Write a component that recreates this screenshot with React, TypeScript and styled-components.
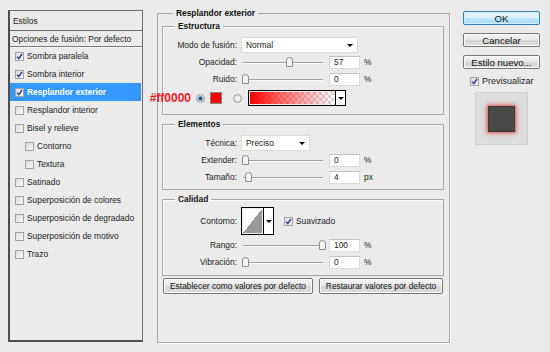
import React from "react";
import styled, { createGlobalStyle, css } from "styled-components";

const GlobalStyle = createGlobalStyle`
  html, body {
    margin: 0;
    padding: 0;
    background: #ebebeb;
  }
  body {
    font-family: "Liberation Sans", Arial, sans-serif;
    font-size: 8.4px;
    color: #1c1c1c;
  }
`;

type ListItem = { label: string; checked?: boolean; indent?: boolean; active?: boolean };

const items: ListItem[] = [
    { label: "Sombra paralela", checked: true },
    { label: "Sombra interior", checked: true },
    { label: "Resplandor exterior", checked: true, active: true },
    { label: "Resplandor interior" },
    { label: "Bisel y relieve" },
    { label: "Contorno", indent: true },
    { label: "Textura", indent: true },
    { label: "Satinado" },
    { label: "Superposición de colores" },
    { label: "Superposición de degradado" },
    { label: "Superposición de motivo" },
    { label: "Trazo" },
];

const CheckBox = ({ checked }: { checked?: boolean }) => (
    <StyledCheckBox>
        {checked && (
            <svg width="7" height="7" viewBox="0 0 7 7">
                <path d="M1 3.6 L2.8 5.6 L6 1" fill="none" stroke="#27378a" strokeWidth="1.4" />
            </svg>
        )}
    </StyledCheckBox>
);

const Slider = ({ value }: { value: number }) => (
    <StyledSlider>
        <SliderTrack />
        <SliderThumb style={{ left: `${1 + value * 0.77}px` }}>
            <svg width="7" height="10" viewBox="0 0 7 10">
                <path d="M0.5 3 Q0.5 0.5 3.5 0.5 Q6.5 0.5 6.5 3 L6.5 9.5 L0.5 9.5 Z" fill="#f4f4f4" stroke="#8d8d8d" />
            </svg>
        </SliderThumb>
    </StyledSlider>
);

const SliderRow = ({ label, value, unit }: { label: string; value: number; unit: string }) => (
    <SliderGrid>
        <FieldLabel>{label}</FieldLabel>
        <Slider value={value} />
        <NumberField>{value}</NumberField>
        <Unit>{unit}</Unit>
    </SliderGrid>
);

export default function App() {
    return (
        <>
            <GlobalStyle />
            <Dialog>
                <StylesPanel>
                    <PanelHeader>Estilos</PanelHeader>
                    <BlendOptions>Opciones de fusión: Por defecto</BlendOptions>
                    {items.map((item) => (
                        <ListRow key={item.label} $indent={item.indent} $active={item.active}>
                            <CheckBox checked={item.checked} />
                            <span>{item.label}</span>
                        </ListRow>
                    ))}
                </StylesPanel>

                <OuterGroup>
                    <GroupTitle $offset={11}>Resplandor exterior</GroupTitle>

                    <InnerGroup $padTop={6} $padBottom={8}>
                        <GroupTitle $offset={12}>Estructura</GroupTitle>
                        <FieldRow>
                            <FieldLabel>Modo de fusión:</FieldLabel>
                            <Select $width={117}>
                                Normal
                                <Caret />
                            </Select>
                        </FieldRow>
                        <SliderRow label="Opacidad:" value={57} unit="%" />
                        <SliderRow label="Ruido:" value={0} unit="%" />
                        <ColorRow>
                            <RadioWrap>
                                <ColorNote>#ff0000</ColorNote>
                                <Radio $checked />
                            </RadioWrap>
                            <Swatch />
                            <Radio />
                            <GradientPicker>
                                <GradientFill />
                                <PickerButton>
                                    <Caret />
                                </PickerButton>
                            </GradientPicker>
                        </ColorRow>
                    </InnerGroup>

                    <InnerGroup $padTop={6} $padBottom={4} $spaced>
                        <GroupTitle $offset={12}>Elementos</GroupTitle>
                        <FieldRow>
                            <FieldLabel>Técnica:</FieldLabel>
                            <Select $width={69}>
                                Preciso
                                <Caret />
                            </Select>
                        </FieldRow>
                        <SliderRow label="Extender:" value={0} unit="%" />
                        <SliderRow label="Tamaño:" value={4} unit="px" />
                    </InnerGroup>

                    <InnerGroup $padTop={3} $padBottom={5} $spaced>
                        <GroupTitle $offset={12}>Calidad</GroupTitle>
                        <ContourRow>
                            <FieldLabel>Contorno:</FieldLabel>
                            <ContourPicker>
                                <ContourCurve />
                                <PickerButton>
                                    <Caret />
                                </PickerButton>
                            </ContourPicker>
                            <CheckLabel>
                                <CheckBox checked />
                                Suavizado
                            </CheckLabel>
                        </ContourRow>
                        <SliderRow label="Rango:" value={100} unit="%" />
                        <SliderRow label="Vibración:" value={0} unit="%" />
                    </InnerGroup>

                    <DefaultsBar>
                        <PanelButton $width={150}>Establecer como valores por defecto</PanelButton>
                        <PanelButton $width={124}>Restaurar valores por defecto</PanelButton>
                    </DefaultsBar>
                </OuterGroup>

                <SideColumn>
                    <SideButton $primary>OK</SideButton>
                    <SideButton>Cancelar</SideButton>
                    <SideButton>Estilo nuevo...</SideButton>
                    <PreviewToggle>
                        <CheckBox checked />
                        Previsualizar
                    </PreviewToggle>
                    <PreviewBox>
                        <PreviewSquare />
                    </PreviewBox>
                </SideColumn>
            </Dialog>
        </>
    );
}

const Dialog = styled.div`
    display: flex;
    align-items: flex-start;
    width: 550px;
    height: 352px;
    box-sizing: border-box;
    padding: 10px 0 0 8px;
`;

/* left list */

const StylesPanel = styled.div`
    width: 135px;
    height: 332px;
    box-sizing: border-box;
    border: 1px solid #6e6e6e;
    border-left: 2px solid #4e4e4e;
    border-bottom: 2px solid #4e4e4e;
    display: flex;
    flex-direction: column;
`;

const PanelHeader = styled.div`
    height: 19px;
    display: flex;
    align-items: center;
    padding-left: 3px;
    border-bottom: 1px solid #707070;
`;

const BlendOptions = styled.div`
    height: 15px;
    display: flex;
    align-items: center;
    padding-left: 2px;
    border-bottom: 1px solid #7c7c7c;
    box-shadow: 0 1px 0 #fafafa;
`;

const ListRow = styled.div<{ $indent?: boolean; $active?: boolean }>`
    height: 18px;
    display: flex;
    align-items: center;
    gap: 3px;
    margin-right: 1px;
    padding-left: ${(p) => (p.$indent ? 15 : 5)}px;
    ${(p) =>
        p.$active &&
        css`
            background: #3399fe;
            color: #fff;
            font-weight: bold;
        `}
`;

const StyledCheckBox = styled.span`
    width: 9px;
    height: 9px;
    box-sizing: border-box;
    flex: none;
    border: 1px solid #a3a3a3;
    background: linear-gradient(135deg, #dcdcdc, #f8f8f8);
    display: flex;
    align-items: center;
    justify-content: center;
`;

/* group boxes */

const OuterGroup = styled.fieldset`
    margin: -2px 0 0 14px;
    width: 293px;
    height: 335px;
    box-sizing: border-box;
    min-width: 0;
    padding: 3px 5px 0 4px;
    border: 1px solid #a8a8a8;
    box-shadow: 1px 1px 0 #fbfbfb;
`;

const GroupTitle = styled.legend<{ $offset: number }>`
    margin-left: ${(p) => p.$offset}px;
    padding: 0 3px;
    line-height: 10px;
    font-weight: bold;
    color: #111;
`;

const InnerGroup = styled.fieldset<{ $padTop: number; $padBottom: number; $spaced?: boolean }>`
    margin: ${(p) => (p.$spaced ? 4 : 0)}px 0 0;
    min-width: 0;
    border: 1px solid #a8a8a8;
    box-shadow: inset 1px 1px 0 #fbfbfb;
    padding: ${(p) => p.$padTop}px 0 ${(p) => p.$padBottom}px;
    display: flex;
    flex-direction: column;
    gap: 1px;
`;

const FieldRow = styled.div`
    display: grid;
    grid-template-columns: 74px auto;
    column-gap: 4px;
    align-items: center;
    justify-content: start;
    height: 16px;
`;

const FieldLabel = styled.span`
    text-align: right;
    white-space: nowrap;
`;

const Select = styled.div<{ $width: number }>`
    width: ${(p) => p.$width}px;
    height: 16px;
    box-sizing: border-box;
    background: #fff;
    border: 1px solid #dadada;
    display: flex;
    align-items: center;
    justify-content: space-between;
    padding: 0 4px 0 4px;
`;

const Caret = styled.span`
    width: 0;
    height: 0;
    border-left: 3px solid transparent;
    border-right: 3px solid transparent;
    border-top: 3px solid #000;
`;

const SliderGrid = styled.div`
    display: grid;
    grid-template-columns: 74px 84px 31px auto;
    column-gap: 4px;
    align-items: center;
    height: 16px;
`;

const StyledSlider = styled.div`
    position: relative;
    height: 12px;
`;

const SliderTrack = styled.div`
    position: absolute;
    left: 2px;
    right: 2px;
    top: 6px;
    height: 1px;
    background: #a2a2a2;
    box-shadow: 0 1px 0 #fdfdfd;
`;

const SliderThumb = styled.div`
    position: absolute;
    top: 1px;
    width: 7px;
    height: 10px;
    line-height: 0;
`;

const NumberField = styled.div`
    height: 13px;
    box-sizing: border-box;
    background: #fff;
    border: 1px solid #d9d9d9;
    border-top-color: #c2c2c2;
    display: flex;
    align-items: center;
    padding-left: 4px;
`;

const Unit = styled.span`
    padding-left: 0;
`;

/* color row */

const ColorRow = styled.div`
    display: flex;
    align-items: center;
    height: 16px;
    margin-top: 2px;
    padding-left: 33px;
`;

const RadioWrap = styled.div`
    position: relative;
    display: flex;
`;

const ColorNote = styled.span`
    position: absolute;
    right: calc(100% + 5px);
    top: -4px;
    font-size: 12px;
    font-weight: bold;
    line-height: 16px;
    color: #ec1c24;
`;

const Radio = styled.span<{ $checked?: boolean }>`
    width: 9px;
    height: 9px;
    box-sizing: border-box;
    border-radius: 50%;
    border: 1px solid #9a9a9a;
    background: ${(p) =>
        p.$checked
            ? "radial-gradient(circle, #1f5f96 0 1.6px, #8fb8d8 2.2px, #e6e6e6 3px)"
            : "radial-gradient(circle, #f6f6f6, #d8d8d8)"};
    margin-right: 5px;
`;

const Swatch = styled.span`
    width: 12px;
    height: 12px;
    box-sizing: border-box;
    background: #fe0000;
    border: 1px solid #8a8a8a;
    margin-right: 11px;
`;

const GradientPicker = styled.div`
    display: flex;
    width: 98px;
    height: 16px;
    box-sizing: border-box;
    border: 1px solid #000;
    margin-left: 1px;
`;

const GradientFill = styled.div`
    flex: 1;
    margin: 1px;
    background: linear-gradient(to right, #ff0000, rgba(255, 0, 0, 0.55) 40%, rgba(255, 0, 0, 0)),
        repeating-conic-gradient(#d6d6d6 0 25%, #ffffff 0 50%) 0 0 / 6px 6px;
`;

const PickerButton = styled.div`
    width: 9px;
    background: #fff;
    border-left: 1px solid #000;
    display: flex;
    align-items: center;
    justify-content: center;
`;

/* contour row */

const ContourRow = styled.div`
    display: grid;
    grid-template-columns: 74px auto auto;
    column-gap: 4px;
    align-items: center;
    justify-content: start;
    height: 28px;
    margin-bottom: 1px;
`;

const ContourPicker = styled.div`
    display: flex;
    width: 33px;
    height: 28px;
    box-sizing: border-box;
    border: 1px solid #000;
`;

const ContourCurve = styled.div`
    flex: 1;
    margin: 1px;
    background: linear-gradient(to bottom right, #ffffff 50%, #9a9a9a 50%);
`;

const CheckLabel = styled.label`
    display: flex;
    align-items: center;
    gap: 3px;
    margin-left: 6px;
`;

/* buttons */

const buttonFace = css`
    box-sizing: border-box;
    border: 1px solid #777;
    border-radius: 2px;
    background: linear-gradient(#f6f6f6, #e6e6e6 50%, #d6d6d6 51%, #dcdcdc);
    box-shadow: inset 0 0 0 1px #fbfbfb;
    display: flex;
    align-items: center;
    justify-content: center;
    color: #111;
`;

const DefaultsBar = styled.div`
    display: flex;
    gap: 6px;
    margin-top: 2px;
    padding-left: 1px;
`;

const PanelButton = styled.div<{ $width: number }>`
    ${buttonFace}
    width: ${(p) => p.$width}px;
    height: 16px;
`;

const SideColumn = styled.div`
    display: flex;
    flex-direction: column;
    width: 77px;
    margin: 1px 0 0 13px;
    gap: 8px;
`;

const SideButton = styled.div<{ $primary?: boolean }>`
    ${buttonFace}
    height: 14px;
    font-size: 9.6px;
    ${(p) =>
        p.$primary &&
        css`
            border-color: #3c7fb1;
            background: linear-gradient(#eaf6fd, #d9f0fc 50%, #bee6fd 51%, #a7d9f5);
            box-shadow: inset 0 0 0 1px #cdeefc;
        `}
`;

const PreviewToggle = styled.label`
    display: flex;
    align-items: center;
    gap: 3px;
    padding-left: 7px;
    margin-top: -1px;
    font-size: 9px;
`;

const PreviewBox = styled.div`
    width: 53px;
    height: 53px;
    box-sizing: border-box;
    margin: -2px 0 0 12px;
    background: #dedede;
    border: 1px solid #cfcfcf;
    display: flex;
    align-items: center;
    justify-content: center;
`;

const PreviewSquare = styled.div`
    width: 25px;
    height: 24px;
    background: #4a4747;
    border: 1px solid #3a3838;
    box-shadow: 0 0 3px 1px rgba(214, 64, 64, 0.75), 0 0 6px 2px rgba(230, 120, 120, 0.35);
`;
